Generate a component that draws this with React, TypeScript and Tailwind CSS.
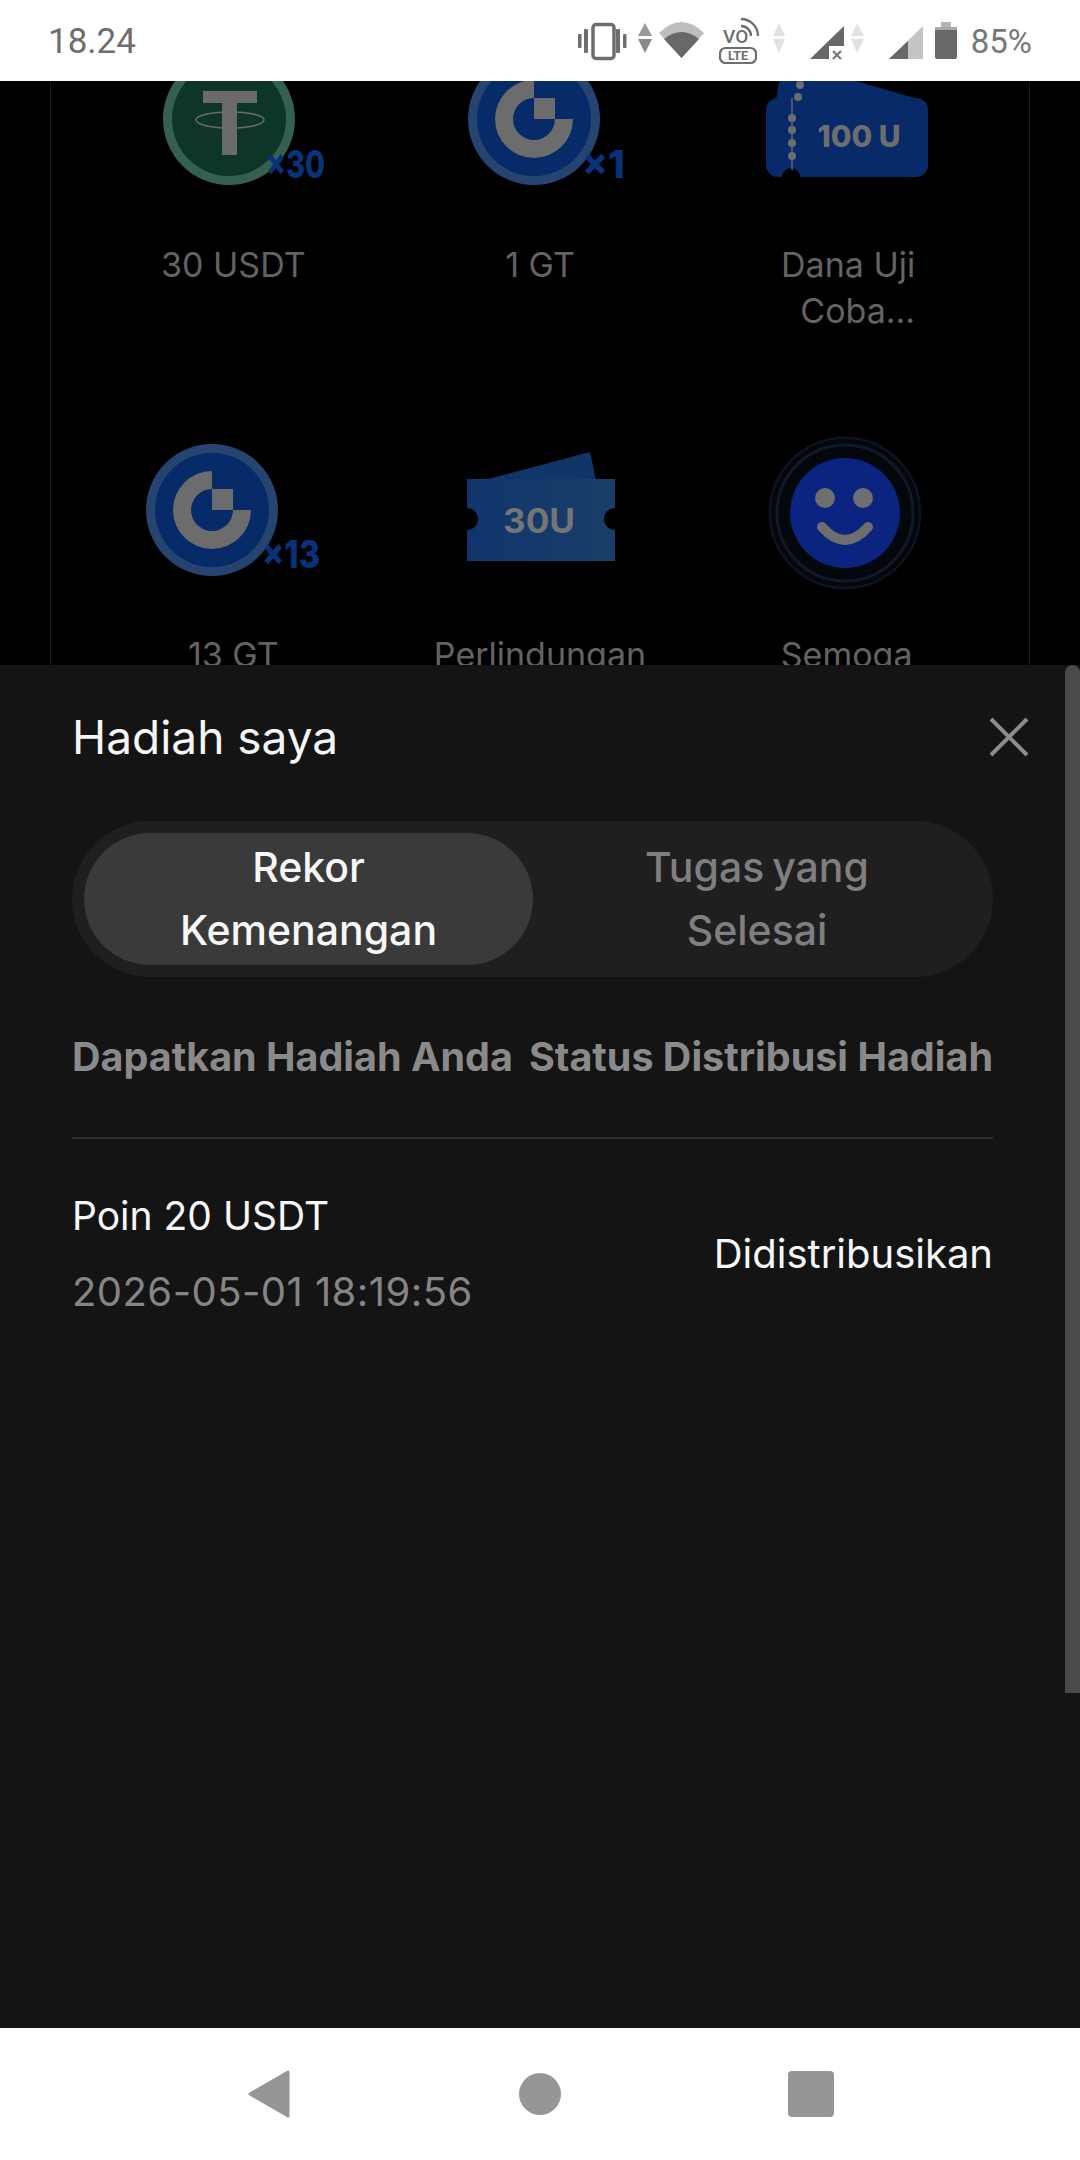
const font = { fontFamily: "Inter, sans-serif" };

function Gate({ cx, cy }: { cx: number; cy: number }) {
  return (
    <g transform={`translate(${cx} ${cy})`}>
      <circle r="66" fill="#264470" />
      <circle r="57" fill="#072a68" />
      <path d="M0 -39 A39 39 0 1 0 39 0 L21 0 A21 21 0 1 1 0 -21 Z" fill="#6c6c6c" />
      <rect x="0" y="-21" width="21" height="21" fill="#6c6c6c" />
    </g>
  );
}

function Reward({ label, right, children }: { label: string; right?: boolean; children: React.ReactNode }) {
  return (
    <div className="h-[390px] flex flex-col items-center">
      <svg width="306" height="220" viewBox="0 0 306 220" className="shrink-0">{children}</svg>
      <div className={right ? "mt-[13px] w-[137px] text-right text-[34px] leading-[46px] text-[#636363]" : "mt-[13px] w-full text-center text-[34px] leading-[46px] text-[#636363]"}>{label}</div>
    </div>
  );
}

function StatusIcons() {
  return (
    <svg width="395" height="60" viewBox="15 0 395 60">
      <rect x="32" y="13.5" width="21" height="34" rx="3" strokeWidth="3.5" fill="none" stroke="#6e6e6e" />
      <g fill="#6e6e6e">
        <rect x="17" y="23" width="3.5" height="14" rx="1" />
        <rect x="23" y="18" width="4" height="24" rx="1" />
        <rect x="55" y="18" width="4" height="24" rx="1" />
        <rect x="62" y="23" width="3.5" height="14" rx="1" />
      </g>
      <path d="M84 12 L91 25 H77 Z" fill="#9a9a9a" />
      <path d="M84 42 L91 28 H77 Z" fill="#8a8a8a" />
      <path d="M120.5 47 L98 22 Q120.5 0 143 22 Z" fill="#bdbdbd" />
      <path d="M120.5 47 L103 28 Q120.5 14 138 28 Z" fill="#686868" />
      <text x="162" y="32" fontSize="19" fontWeight="500" fill="#6e6e6e" fontFamily="Roboto, sans-serif">VO</text>
      <path d="M180 15 A10 10 0 0 1 190 25 M180 8 A17 17 0 0 1 197 25" fill="none" stroke="#6e6e6e" strokeWidth="2.4" />
      <rect x="159" y="37" width="36" height="15" rx="5.5" fill="none" stroke="#6e6e6e" strokeWidth="2.2" />
      <text x="177" y="49" fontSize="12.5" fontWeight="700" textAnchor="middle" fill="#6e6e6e" fontFamily="Roboto, sans-serif">LTE</text>
      <path d="M218 12 L224 25 H212 Z M218 42 L224 28 H212 Z" fill="#e2e2e2" />
      <path d="M283 15 V35 H268 V48 H249 Z" fill="#686868" />
      <path d="M272 40 L280 48 M280 40 L272 48" stroke="#777" strokeWidth="2.2" />
      <path d="M296 12 L303 25 H290 Z M296 42 L303 28 H290 Z" fill="#e2e2e2" />
      <path d="M362 15 V48 H328 Z" fill="#c4c4c4" />
      <path d="M347 30 V48 H328 Z" fill="#686868" />
      <rect x="380" y="11" width="10" height="6" fill="#b4b4b4" />
      <rect x="374" y="16" width="22" height="5" fill="#a8a8a8" />
      <path d="M374 19 H396 V46 A2 2 0 0 1 394 48 H376 A2 2 0 0 1 374 46 Z" fill="#686868" />
    </svg>
  );
}

export default function App() {
  return (
    <div className="w-[1080px] h-[2160px] flex flex-col overflow-hidden bg-white" style={font}>
      <div className="h-[81px] shrink-0 flex items-center justify-between pl-[48px] pr-[48px]">
        <span className="mt-[4px] text-[35px] text-[#6e6e6e]" style={{ fontFamily: "Roboto, sans-serif" }}>18.24</span>
        <div className="flex items-center">
          <StatusIcons />
          <span className="mt-[2px] text-[33px] text-[#777777]" style={{ fontFamily: "Roboto, sans-serif" }}>85%</span>
        </div>
      </div>

      <div className="relative flex-1 bg-black overflow-hidden">
        <div className="mx-[50px] -mt-[72px] border-x border-[#1c1c1c] px-[29px] grid grid-cols-3">
          <Reward label="30 USDT">
            <circle cx="149" cy="110" r="66" fill="#35604f" />
            <circle cx="149" cy="110" r="57" fill="#0d3627" />
            <path d="M123 82 H177 V94 H157 V146 H142 V94 H123 Z" fill="#6a6a6a" />
            <ellipse cx="150" cy="111" rx="34" ry="8" fill="none" stroke="#6a6a6a" strokeWidth="1.5" />
            <text x="186" y="169" fontSize="38" fontWeight="800" textLength="59" lengthAdjust="spacingAndGlyphs" fill="#08337a" fontFamily="Inter, sans-serif">×30</text>
          </Reward>
          <Reward label="1 GT">
            <Gate cx={147} cy={110} />
            <text x="195" y="169" fontSize="38" fontWeight="800" fill="#08337a" fontFamily="Inter, sans-serif">×1</text>
          </Reward>
          <Reward label="Dana Uji Coba..." right>
            <g transform="translate(0 93)">
              <path d="M82 -2 L88 -40 H97 L224 -3 Z" fill="#082a68" />
              <path d="M72 8 A12 12 0 0 1 84 -4 H222 A12 12 0 0 1 234 8 V63 A12 12 0 0 1 222 75 H84 A12 12 0 0 1 72 63 Z" fill="#082a68" />
              <circle cx="97" cy="75" r="9" fill="#000000" />
              <path d="M98 -4 V68" stroke="#5b6a80" strokeWidth="1.5" />
              <circle cx="98" cy="16" r="4" fill="#6d6d6d" />
              <circle cx="98" cy="28" r="4" fill="#6d6d6d" />
              <circle cx="98" cy="41" r="4" fill="#6d6d6d" />
              <circle cx="98" cy="54" r="4" fill="#6d6d6d" />
              <circle cx="106" cy="-17" r="4" fill="#6d6d6d" />
              <circle cx="104" cy="-5" r="4" fill="#6d6d6d" />
              <text x="165" y="45" textAnchor="middle" fontSize="30" fontWeight="800" textLength="83" fill="#6e6e6e" fontFamily="Inter, sans-serif">100 U</text>
            </g>
          </Reward>
          <Reward label="13 GT">
            <Gate cx={132} cy={111} />
            <text x="182" y="169" fontSize="38" fontWeight="800" textLength="58" lengthAdjust="spacingAndGlyphs" fill="#08337a" fontFamily="Inter, sans-serif">×13</text>
          </Reward>
          <Reward label="Perlindungan">
            <defs>
              <linearGradient id="tk" x1="0" x2="1" y1="0" y2="0">
                <stop offset="0" stopColor="#10356c" />
                <stop offset="1" stopColor="#1a3e68" />
              </linearGradient>
            </defs>
            <path d="M97 81 L203 53 L209 81 Z" fill="#103568" />
            <path d="M80 80 H228 V109 A11 11 0 0 0 228 131 V162 H80 V131 A11 11 0 0 0 80 109 Z" fill="url(#tk)" />
            <text x="152" y="134" textAnchor="middle" fontSize="34" fontWeight="700" textLength="72" lengthAdjust="spacingAndGlyphs" fill="#757575" fontFamily="Inter, sans-serif">30U</text>
          </Reward>
          <Reward label="Semoga">
            <circle cx="151" cy="114" r="77" fill="#04070c" />
            <circle cx="151" cy="114" r="75" fill="none" stroke="#0e1622" strokeWidth="2" />
            <circle cx="151" cy="114" r="68" fill="none" stroke="#101a28" strokeWidth="3" />
            <circle cx="151" cy="114" r="55" fill="#0a2480" />
            <circle cx="131" cy="99" r="10" fill="#6e6e6e" />
            <circle cx="169" cy="99" r="10" fill="#6e6e6e" />
            <path d="M128 128 Q151 154 174 128" fill="none" stroke="#6e6e6e" strokeWidth="10" strokeLinecap="round" />
          </Reward>
        </div>

        <div className="absolute inset-x-0 top-[584px] bottom-0 bg-[#141414] px-[72px] pt-[46px]">
          <div className="flex items-center justify-between h-[52px]">
            <span className="text-[46px] leading-[52px] text-[#f5f5f5]">Hadiah saya</span>
            <svg className="mr-[-21px]" width="40" height="40" viewBox="0 0 40 40">
              <path d="M2 2 L38 38 M38 2 L2 38" stroke="#8c8c8c" strokeWidth="4" fill="none" />
            </svg>
          </div>
          <div className="mt-[58px] flex h-[156px] w-[921px] rounded-[78px] bg-[#1f1f1f] p-[12px]">
            <div className="w-[449px] rounded-[66px] bg-[#3a3a3a] flex items-center justify-center text-center text-[41px] leading-[63px] font-medium text-[#f7f7f7] px-[90px]">
              Rekor Kemenangan
            </div>
            <div className="flex-1 flex items-center justify-center text-center text-[41px] leading-[63px] font-medium text-[#7f7f7f] px-[90px] [word-spacing:-3px]">
              Tugas yang Selesai
            </div>
          </div>
          <div className="mt-[54px] flex justify-between w-[921px] leading-[52px] font-bold text-[#8a8a8a] whitespace-nowrap">
            <span className="text-[39.5px]">Dapatkan Hadiah Anda</span>
            <span className="text-[39.5px]">Status Distribusi Hadiah</span>
          </div>
          <div className="mt-[54px] w-[921px] h-[2px] bg-[#2c2c2c]" />
          <div className="mt-[51px] flex items-center justify-between w-[921px]">
            <div>
              <div className="text-[39px] leading-[52px] text-[#f7f7f7]">Poin 20 USDT</div>
              <div className="mt-[24px] text-[40px] leading-[52px] text-[#858585] tracking-[0.45px]">2026-05-01 18:19:56</div>
            </div>
            <div className="text-[40px] leading-[52px] text-[#f7f7f7]">Didistribusikan</div>
          </div>
          <div className="absolute right-0 top-0 h-[1028px] w-[15px] rounded-t-[8px] bg-[#4a4a4a]" />
        </div>
      </div>

      <div className="h-[132px] shrink-0 bg-white flex items-center justify-center">
        <div className="w-[464px] flex justify-center">
          <svg width="44" height="50" viewBox="0 0 44 50">
            <path d="M41 3 V47 L3 25 Z" fill="#969696" stroke="#969696" strokeWidth="3" strokeLinejoin="round" />
          </svg>
        </div>
        <div className="w-[42px] h-[42px] rounded-full bg-[#969696] mx-[18px]" />
        <div className="w-[464px] flex justify-center">
          <div className="w-[46px] h-[46px] rounded-[4px] bg-[#969696]" />
        </div>
      </div>
    </div>
  );
}
